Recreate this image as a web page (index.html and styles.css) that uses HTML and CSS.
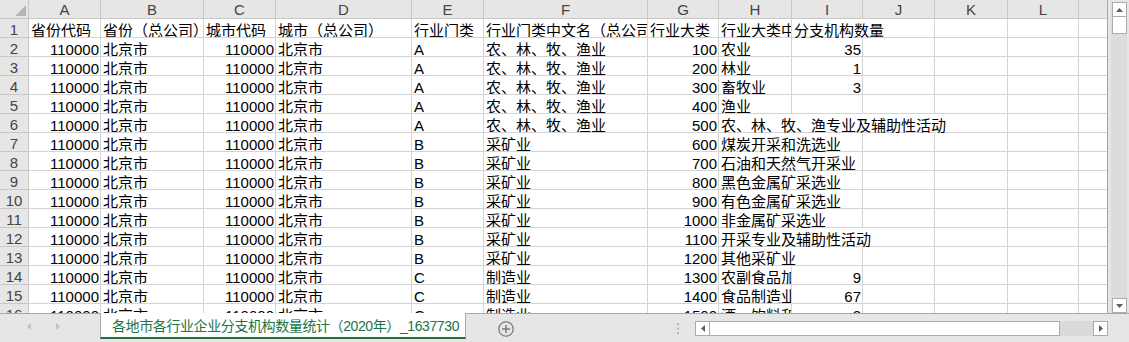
FILE: index.html
```html
<!DOCTYPE html>
<html lang="zh-CN">
<head>
<meta charset="utf-8">
<title>各地市各行业企业分支机构数量统计</title>
<link rel="stylesheet" href="styles.css">
</head>
<body>
<div class="app">
  <div class="main">
    <div class="grid">
      <table class="sheet">
        <colgroup>
          <col class="w-rh"><col class="w72"><col class="w103"><col class="w72"><col class="w136"><col class="w72"><col class="w164"><col class="w71"><col class="w73"><col class="w71"><col class="w72"><col class="w73"><col class="w71"><col class="w28">
        </colgroup>
        <thead>
          <tr class="colh">
            <th class="corner"><svg width="11" height="11" viewBox="0 0 11 11"><polygon points="11,0 11,11 0,11" fill="#b5b5b5"/></svg></th>
            <th>A</th><th>B</th><th>C</th><th>D</th><th>E</th><th>F</th><th>G</th><th>H</th><th>I</th><th>J</th><th>K</th><th>L</th><th class="last"></th>
          </tr>
        </thead>
        <tbody>
          <tr><th>1</th><td>省份代码</td><td>省份（总公司）</td><td>城市代码</td><td>城市（总公司）</td><td>行业门类</td><td>行业门类中文名（总公司）</td><td>行业大类</td><td>行业大类中文名（总公司）</td><td class="sp">分支机构数量</td><td></td><td></td><td></td><td class="last"></td></tr>
          <tr><th>2</th><td class="n">110000</td><td>北京市</td><td class="n">110000</td><td>北京市</td><td>A</td><td>农、林、牧、渔业</td><td class="n">100</td><td>农业</td><td class="n">35</td><td></td><td></td><td></td><td class="last"></td></tr>
          <tr><th>3</th><td class="n">110000</td><td>北京市</td><td class="n">110000</td><td>北京市</td><td>A</td><td>农、林、牧、渔业</td><td class="n">200</td><td>林业</td><td class="n">1</td><td></td><td></td><td></td><td class="last"></td></tr>
          <tr><th>4</th><td class="n">110000</td><td>北京市</td><td class="n">110000</td><td>北京市</td><td>A</td><td>农、林、牧、渔业</td><td class="n">300</td><td>畜牧业</td><td class="n">3</td><td></td><td></td><td></td><td class="last"></td></tr>
          <tr><th>5</th><td class="n">110000</td><td>北京市</td><td class="n">110000</td><td>北京市</td><td>A</td><td>农、林、牧、渔业</td><td class="n">400</td><td>渔业</td><td></td><td></td><td></td><td></td><td class="last"></td></tr>
          <tr><th>6</th><td class="n">110000</td><td>北京市</td><td class="n">110000</td><td>北京市</td><td>A</td><td>农、林、牧、渔业</td><td class="n">500</td><td class="sp">农、林、牧、渔专业及辅助性活动</td><td class="nb"></td><td class="nb"></td><td></td><td></td><td class="last"></td></tr>
          <tr><th>7</th><td class="n">110000</td><td>北京市</td><td class="n">110000</td><td>北京市</td><td>B</td><td>采矿业</td><td class="n">600</td><td class="sp">煤炭开采和洗选业</td><td></td><td></td><td></td><td></td><td class="last"></td></tr>
          <tr><th>8</th><td class="n">110000</td><td>北京市</td><td class="n">110000</td><td>北京市</td><td>B</td><td>采矿业</td><td class="n">700</td><td class="sp">石油和天然气开采业</td><td></td><td></td><td></td><td></td><td class="last"></td></tr>
          <tr><th>9</th><td class="n">110000</td><td>北京市</td><td class="n">110000</td><td>北京市</td><td>B</td><td>采矿业</td><td class="n">800</td><td class="sp">黑色金属矿采选业</td><td></td><td></td><td></td><td></td><td class="last"></td></tr>
          <tr><th>10</th><td class="n">110000</td><td>北京市</td><td class="n">110000</td><td>北京市</td><td>B</td><td>采矿业</td><td class="n">900</td><td class="sp">有色金属矿采选业</td><td></td><td></td><td></td><td></td><td class="last"></td></tr>
          <tr><th>11</th><td class="n">110000</td><td>北京市</td><td class="n">110000</td><td>北京市</td><td>B</td><td>采矿业</td><td class="n">1000</td><td class="sp">非金属矿采选业</td><td></td><td></td><td></td><td></td><td class="last"></td></tr>
          <tr><th>12</th><td class="n">110000</td><td>北京市</td><td class="n">110000</td><td>北京市</td><td>B</td><td>采矿业</td><td class="n">1100</td><td class="sp">开采专业及辅助性活动</td><td class="nb"></td><td></td><td></td><td></td><td class="last"></td></tr>
          <tr><th>13</th><td class="n">110000</td><td>北京市</td><td class="n">110000</td><td>北京市</td><td>B</td><td>采矿业</td><td class="n">1200</td><td class="sp">其他采矿业</td><td></td><td></td><td></td><td></td><td class="last"></td></tr>
          <tr><th>14</th><td class="n">110000</td><td>北京市</td><td class="n">110000</td><td>北京市</td><td>C</td><td>制造业</td><td class="n">1300</td><td>农副食品加工业</td><td class="n">9</td><td></td><td></td><td></td><td class="last"></td></tr>
          <tr><th>15</th><td class="n">110000</td><td>北京市</td><td class="n">110000</td><td>北京市</td><td>C</td><td>制造业</td><td class="n">1400</td><td>食品制造业</td><td class="n">67</td><td></td><td></td><td></td><td class="last"></td></tr>
          <tr><th>16</th><td class="n">110000</td><td>北京市</td><td class="n">110000</td><td>北京市</td><td>C</td><td>制造业</td><td class="n">1500</td><td>酒、饮料和精制茶制造业</td><td class="n">3</td><td></td><td></td><td></td><td class="last"></td></tr>
        </tbody>
      </table>
    </div>
    <div class="vscroll">
      <div class="vtrack">
        <div class="sbtn"><svg width="7" height="4" viewBox="0 0 7 4"><polygon points="0,4 3.5,0 7,4" fill="#606060"/></svg></div>
        <div class="vthumb"></div>
        <div class="sbtn down"><svg width="7" height="4" viewBox="0 0 7 4"><polygon points="0,0 7,0 3.5,4" fill="#606060"/></svg></div>
      </div>
    </div>
  </div>
  <div class="tabbar">
    <div class="nav">
      <svg width="100" height="28" viewBox="0 0 100 28">
        <polygon points="31,9 27,12.5 31,16" fill="#c2c2c2"/>
        <polygon points="56,9 60,12.5 56,16" fill="#c2c2c2"/>
      </svg>
    </div>
    <div class="tab">各地市各行业企业分支机构数量统计（2020年）_1637730</div>
    <div class="add">
      <svg width="16" height="16" viewBox="0 0 16 16">
        <circle cx="8" cy="8" r="7.2" fill="none" stroke="#7a7a7a" stroke-width="1.3"/>
        <line x1="8" y1="4" x2="8" y2="12" stroke="#7a7a7a" stroke-width="1.5"/>
        <line x1="4" y1="8" x2="12" y2="8" stroke="#7a7a7a" stroke-width="1.5"/>
      </svg>
    </div>
    <div class="spacer"></div>
    <div class="dots">
      <svg width="2" height="11" viewBox="0 0 2 11">
        <rect x="0" y="0" width="2" height="2" fill="#b5b5b5"/>
        <rect x="0" y="4.5" width="2" height="2" fill="#b5b5b5"/>
        <rect x="0" y="9" width="2" height="2" fill="#b5b5b5"/>
      </svg>
    </div>
    <div class="hscroll">
      <div class="hbtn"><svg width="4" height="7" viewBox="0 0 4 7"><polygon points="4,0 0,3.5 4,7" fill="#606060"/></svg></div>
      <div class="hthumb"></div>
      <div class="htrack"></div>
      <div class="hbtn"><svg width="4" height="7" viewBox="0 0 4 7"><polygon points="0,0 4,3.5 0,7" fill="#606060"/></svg></div>
    </div>
  </div>
</div>
</body>
</html>
```
FILE: styles.css
```css
* {
  box-sizing: border-box;
}

html, body {
  margin: 0;
  padding: 0;
}

body {
  width: 1129px;
  height: 342px;
  overflow: hidden;
  background: #e6e6e6;
  font-family: "Liberation Sans", "Noto Sans CJK SC", sans-serif;
}

.app {
  display: flex;
  flex-direction: column;
  width: 1129px;
  height: 342px;
}

.main {
  display: flex;
  height: 313px;
}

.grid {
  width: 1108px;
  height: 313px;
  overflow: hidden;
  background: #ffffff;
  border-right: 1px solid #a8a8a8;
  flex: none;
}

.sheet {
  border-collapse: separate;
  border-spacing: 0;
  table-layout: fixed;
  width: 1107px;
  font-size: 15px;
  color: #000000;
}

.w-rh { width: 29px; }
.w28 { width: 28px; }
.w71 { width: 71px; }
.w72 { width: 72px; }
.w73 { width: 73px; }
.w103 { width: 103px; }
.w136 { width: 136px; }
.w164 { width: 164px; }

.sheet th,
.sheet td {
  height: 19px;
  padding: 0;
  border-right: 1px solid #d4d4d4;
  border-bottom: 1px solid #d4d4d4;
  white-space: nowrap;
  overflow: hidden;
}

.sheet td {
  padding: 0 1px 0 2px;
  line-height: 13px;
  vertical-align: bottom;
  text-align: left;
}

.sheet th {
  background: #e6e6e6;
  color: #444444;
  font-weight: normal;
  text-align: center;
  border-right-color: #c8c8c8;
  border-bottom-color: #c8c8c8;
}

.colh th {
  line-height: 16px;
  vertical-align: bottom;
}

.sheet tbody th {
  line-height: 15px;
  vertical-align: bottom;
}

.colh th.corner {
  padding: 0 2px 2px 0;
  vertical-align: bottom;
  line-height: 0;
}

.corner svg {
  display: block;
  margin-left: auto;
}

.sheet td.n {
  text-align: right;
}

.sheet td.sp {
  overflow: visible;
  border-right-color: transparent;
}

.sheet td.nb {
  border-right-color: transparent;
}

.sheet .last {
  border-right: none;
}

/* vertical scrollbar */
.vscroll {
  width: 21px;
  height: 313px;
  padding: 2px 2px 0 3px;
  display: flex;
  flex: none;
}

.vtrack {
  width: 16px;
  height: 311px;
  background: #dcdcdc;
  padding-left: 1px;
  display: flex;
  flex-direction: column;
}

.sbtn {
  width: 15px;
  height: 15px;
  background: #ffffff;
  border: 1px solid #ababab;
  display: flex;
  align-items: center;
  justify-content: center;
}

.sbtn svg {
  display: block;
}

.sbtn.down {
  margin-top: auto;
}

.vthumb {
  width: 15px;
  height: 17px;
  background: #ffffff;
  border: 1px solid #ababab;
  border-top: none;
}

/* sheet tab bar */
.tabbar {
  height: 29px;
  border-top: 1px solid #a8a8a8;
  display: flex;
  align-items: flex-start;
  padding-right: 21px;
  background: #e6e6e6;
}

.nav {
  width: 100px;
  height: 28px;
  flex: none;
}

.nav svg {
  display: block;
}

.tab {
  width: 366px;
  height: 26px;
  margin-top: -1px;
  flex: none;
  background: #ffffff;
  border-left: 1px solid #a8a8a8;
  border-right: 1px solid #a8a8a8;
  border-bottom: 2px solid #217346;
  padding: 3px 0 0 11px;
  line-height: 21px;
  font-size: 14px;
  letter-spacing: -0.4px;
  color: #217346;
  white-space: nowrap;
  overflow: hidden;
}

.add {
  width: 16px;
  height: 16px;
  margin: 7px 0 0 32px;
  flex: none;
}

.add svg,
.dots svg {
  display: block;
}

.spacer {
  flex: 1;
}

.dots {
  width: 2px;
  height: 11px;
  margin: 9px 16px 0 0;
  flex: none;
}

.hscroll {
  width: 413px;
  height: 15px;
  margin-top: 7px;
  display: flex;
  flex: none;
}

.hbtn {
  width: 15px;
  height: 15px;
  background: #ffffff;
  border: 1px solid #ababab;
  display: flex;
  align-items: center;
  justify-content: center;
  flex: none;
}

.hbtn svg {
  display: block;
}

.hthumb {
  width: 350px;
  height: 15px;
  background: #ffffff;
  border: 1px solid #ababab;
  border-left: none;
  flex: none;
}

.htrack {
  flex: 1;
  height: 15px;
  background: #dadada;
}
```
